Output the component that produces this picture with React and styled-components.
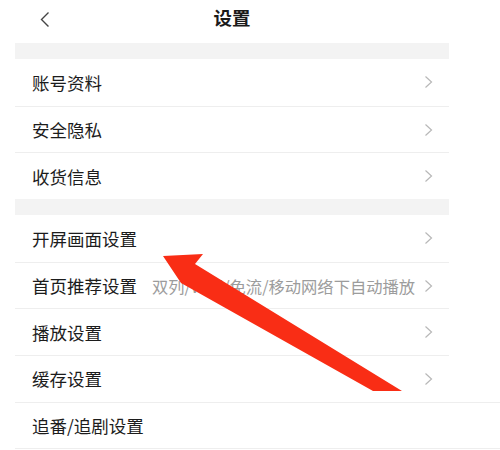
import styled, { createGlobalStyle } from 'styled-components';

const GlobalStyle = createGlobalStyle`
  * {
    box-sizing: border-box;
  }

  body {
    margin: 0;
    background: #ffffff;
    font-family: "Noto Sans CJK SC", "Noto Sans", sans-serif;
    color: #222222;
  }
`;

const groups = [
  [
    { label: '账号资料' },
    { label: '安全隐私' },
    { label: '收货信息' },
  ],
  [
    { label: '开屏画面设置' },
    { label: '首页推荐设置', hint: '双列/WiFi/免流/移动网络下自动播放' },
    { label: '播放设置' },
    { label: '缓存设置' },
    { label: '追番/追剧设置', wide: true, noArrow: true },
  ],
];

function BackIcon() {
  return (
    <svg width="12" height="17" viewBox="0 0 12 17">
      <polyline
        points="9.5,1.5 2.5,8.5 9.5,15.5"
        fill="none"
        stroke="#444"
        strokeWidth="1.4"
      />
    </svg>
  );
}

function Chevron() {
  return (
    <svg width="9" height="14" viewBox="0 0 9 14">
      <polyline
        points="1.5,1.5 7.5,7 1.5,12.5"
        fill="none"
        stroke="#b8b8b8"
        strokeWidth="1.2"
      />
    </svg>
  );
}

function App() {
  return (
    <Page>
      <GlobalStyle />
      <Panel>
        <Header>
          <BackButton>
            <BackIcon />
          </BackButton>
          <Title>设置</Title>
        </Header>
        {groups.map((rows, gi) => (
          <Group key={gi}>
            <Spacer />
            {rows.map((row) => (
              <Row key={row.label} $wide={row.wide}>
                <Label>{row.label}</Label>
                {row.hint && <Hint>{row.hint}</Hint>}
                {!row.noArrow && (
                  <ArrowSlot>
                    <Chevron />
                  </ArrowSlot>
                )}
              </Row>
            ))}
          </Group>
        ))}
      </Panel>
      <Overlay width="500" height="450" viewBox="0 0 500 450">
        <polygon
          points="163,256 203,254 195,264 402,391 373,391 181,283"
          fill="#f92d15"
        />
      </Overlay>
    </Page>
  );
}

export default App;

const Page = styled.div`
  position: relative;
  width: 500px;
  height: 450px;
  overflow: hidden;
  background: #ffffff;
`;

const Panel = styled.div`
  width: 434px;
  margin-left: 15px;
`;

const Header = styled.div`
  position: relative;
  height: 43px;
  display: flex;
  align-items: center;
  justify-content: center;
`;

const BackButton = styled.div`
  position: absolute;
  left: 24px;
  top: 11px;
  display: flex;
`;

const Title = styled.div`
  font-size: 18.5px;
  font-weight: 700;
  color: #1a1a1a;
  margin-top: -9px;
`;

const Group = styled.div`
  display: flex;
  flex-direction: column;
`;

const Spacer = styled.div`
  height: 16px;
  background: #f3f3f3;
`;

const Row = styled.div`
  display: flex;
  align-items: center;
  height: 46.7px;
  padding: 0 16px 0 17px;
  margin-right: ${(p) => (p.$wide ? '-51px' : '0')};
  background: #ffffff;

  & + & {
    border-top: 1px solid #eeeeee;
  }

  ${(p) => p.$wide && 'border-bottom: 1px solid #eeeeee;'}
`;

const Label = styled.span`
  font-size: 17.5px;
  color: #1c1c1c;
  white-space: nowrap;
`;

const Hint = styled.span`
  margin-left: 15px;
  font-size: 16.3px;
  color: #9c9c9c;
  white-space: nowrap;
`;

const ArrowSlot = styled.span`
  margin-left: auto;
  display: flex;
`;

const Overlay = styled.svg`
  position: absolute;
  top: 0;
  left: 0;
  pointer-events: none;
`;
